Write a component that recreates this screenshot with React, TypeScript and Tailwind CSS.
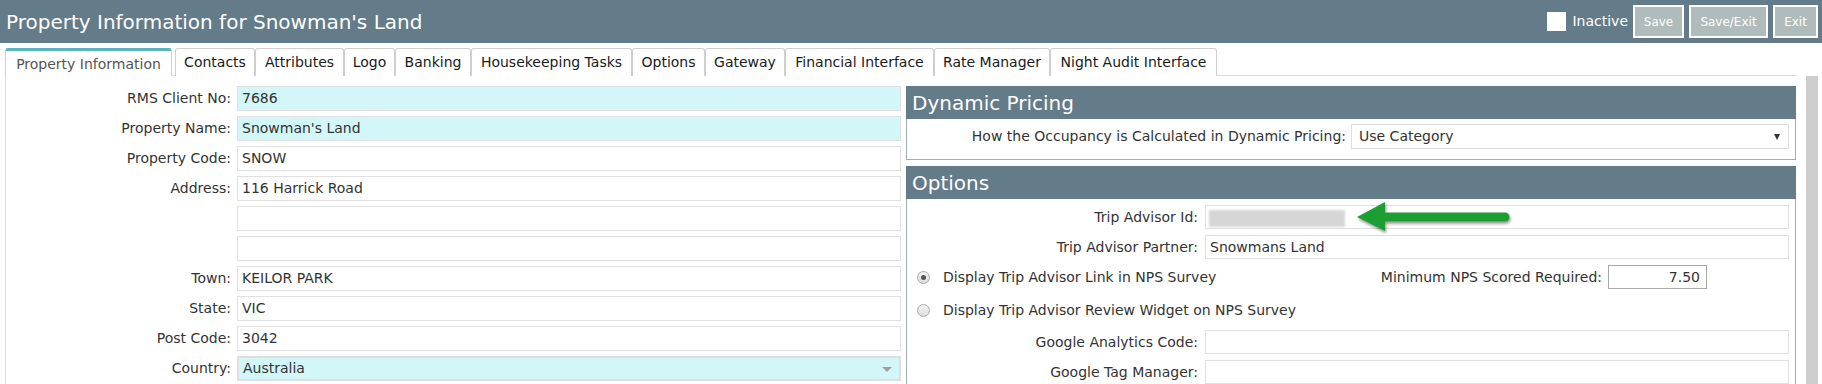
import React from "react";

const tabs = [
  { label: "Property Information", w: 167, active: true },
  { label: "Contacts", w: 80 },
  { label: "Attributes", w: 89 },
  { label: "Logo", w: 51 },
  { label: "Banking", w: 76 },
  { label: "Housekeeping Tasks", w: 161 },
  { label: "Options", w: 73 },
  { label: "Gateway", w: 80 },
  { label: "Financial Interface", w: 149 },
  { label: "Rate Manager", w: 116 },
  { label: "Night Audit Interface", w: 167 },
];

const fields: { label: string; value: string; tone?: "cyan" | "select" }[] = [
  { label: "RMS Client No:", value: "7686", tone: "cyan" },
  { label: "Property Name:", value: "Snowman's Land", tone: "cyan" },
  { label: "Property Code:", value: "SNOW" },
  { label: "Address:", value: "116 Harrick Road" },
  { label: "", value: "" },
  { label: "", value: "" },
  { label: "Town:", value: "KEILOR PARK" },
  { label: "State:", value: "VIC" },
  { label: "Post Code:", value: "3042" },
  { label: "Country:", value: "Australia", tone: "select" },
];

const Radio = ({ checked }: { checked?: boolean }) => (
  <span className="flex h-[13px] w-[13px] flex-none items-center justify-center rounded-full border border-[#a9a9a9] bg-gradient-to-b from-[#f4f4f4] to-[#dcdcdc]">
    {checked && <span className="h-[5px] w-[5px] rounded-full bg-[#555]" />}
  </span>
);

const OptRow = ({ label, children, className = "" }: { label: string; children?: React.ReactNode; className?: string }) => (
  <div className={"flex h-[24px] items-center gap-[7px] " + className}>
    <div className="w-[291px] flex-none text-right">{label}</div>
    <div className="relative h-[24px] flex-1 border border-[#e0e0e0] bg-white pl-[4px] leading-[22px]">
      {children}
    </div>
  </div>
);

export default function App() {
  return (
    <div className="relative h-[384px] w-[1822px] overflow-hidden bg-white font-['DejaVu_Sans',Verdana,sans-serif] text-[#333]">
      {/* title bar */}
      <div className="flex h-[43px] items-center bg-[#647b89] pl-[6px] pr-[4px] text-white">
        <h1 className="text-[20px]">Property Information for Snowman's Land</h1>
        <div className="ml-auto flex items-center">
          <span className="h-[19px] w-[19px] bg-white" />
          <span className="ml-[6px] text-[14px]">Inactive</span>
          <div className="ml-[5px] flex gap-[5px] text-[12px]">
            <button className="h-[33px] w-[51px] border-2 border-white bg-[#b0bbbb]">Save</button>
            <button className="h-[33px] w-[79px] border-2 border-white bg-[#b0bbbb]">Save/Exit</button>
            <button className="h-[33px] w-[45px] border-2 border-white bg-[#b0bbbb]">Exit</button>
          </div>
        </div>
      </div>

      {/* tabs */}
      <div className="relative z-10 mt-[5px] flex pl-[5px] text-[14px]">
        {tabs.map((t) => (
          <div
            key={t.label}
            style={{ width: t.w }}
            className={
              "flex h-[28px] flex-none items-center justify-center rounded-t-[3px] border border-b-0 bg-white " +
              (t.active
                ? "mr-[3px] border-[#d0d0d0] border-t-[3px] border-t-[#5ab4bd] pt-[2px] text-[#555]"
                : "border-[#cfcfcf] text-[#1a1a1a]")
            }
          >
            {t.label}
          </div>
        ))}
      </div>

      <div className="flex">
        {/* content */}
        <div className="-mt-px ml-[5px] flex h-[310px] w-[1792px] flex-none gap-[5px] border-l border-t border-[#dcdcdc] pt-[10px] text-[14px]">
          {/* left column */}
          <div className="flex w-[895px] flex-none flex-col gap-[5px]">
            {fields.map((f, i) => (
              <div key={i} className="flex h-[25px] items-center gap-[6px]">
                <div className="w-[225px] flex-none text-right">{f.label}</div>
                <div
                  className={
                    "relative h-[25px] flex-1 pl-[4px] " +
                    (f.tone === "cyan"
                      ? "border border-[#e0e0e0] bg-[#d3f6f9] leading-[23px]"
                      : f.tone === "select"
                      ? "border-2 border-[#dfdfdf] bg-[#d3f6f9] leading-[21px]"
                      : "border border-[#e0e0e0] bg-white leading-[23px]")
                  }
                >
                  {f.value}
                  {f.tone === "select" && (
                    <span className="absolute right-[7px] top-[9px] h-0 w-0 border-x-[5px] border-t-[5px] border-x-transparent border-t-[#a0a0a0]" />
                  )}
                </div>
              </div>
            ))}
          </div>

          {/* right column */}
          <div className="flex w-[890px] flex-none flex-col">
            <div className="flex h-[33px] items-center bg-[#647b89] pl-[6px] text-[20px] text-white">Dynamic Pricing</div>
            <div className="flex h-[41px] gap-[5px] border-x border-b border-[#9fadb5] pr-[6px] pt-[5px]">
              <div className="flex-1 pt-[2px] text-right">How the Occupancy is Calculated in Dynamic Pricing:</div>
              <div className="relative h-[25px] w-[438px] flex-none border border-[#dedede] bg-white pl-[7px] leading-[23px]">
                Use Category
                <span className="absolute right-[8px] top-[9px] h-0 w-0 border-x-[3.5px] border-t-[6px] border-x-transparent border-t-[#333]" />
              </div>
            </div>

            <div className="mt-[6px] flex h-[33px] items-center bg-[#647b89] pl-[6px] text-[20px] text-white">Options</div>
            <div className="flex flex-1 flex-col border-x border-[#9fadb5] pr-[6px] pt-[6px]">
              <OptRow label="Trip Advisor Id:">
                <div className="absolute left-[3px] top-[4px] h-[17px] w-[136px] bg-[#d6d6d6] blur-[1px]" />
              </OptRow>
              <OptRow label="Trip Advisor Partner:" className="mt-[6px]">
                Snowmans Land
              </OptRow>
              <div className="mt-[6px] flex h-[24px] items-center pl-[10px]">
                <Radio checked />
                <span className="ml-[13px]">Display Trip Advisor Link in NPS Survey</span>
                <div className="ml-auto mr-[82px] flex items-center gap-[6px]">
                  <span>Minimum NPS Scored Required:</span>
                  <div className="h-[24px] w-[99px] border border-[#a9a9a9] pr-[6px] text-right leading-[22px]">7.50</div>
                </div>
              </div>
              <div className="mt-[9px] flex h-[24px] items-center pl-[10px]">
                <Radio />
                <span className="ml-[13px]">Display Trip Advisor Review Widget on NPS Survey</span>
              </div>
              <OptRow label="Google Analytics Code:" className="mt-[8px]" />
              <OptRow label="Google Tag Manager:" className="mt-[6px]" />
            </div>
          </div>
        </div>

        {/* scrollbar */}
        <div className="ml-[9px] h-[310px] w-[12px] flex-none bg-[#cdcdcd]" />
      </div>

      {/* green annotation arrow */}
      <svg className="absolute left-[1350px] top-[196px]" width="170" height="44" viewBox="0 0 170 44">
        <defs>
          <filter id="sh" x="-10%" y="-30%" width="130%" height="170%">
            <feDropShadow dx="1" dy="2" stdDeviation="1.5" floodColor="#000" floodOpacity="0.45" />
          </filter>
        </defs>
        <path
          d="M7 21 L35 6 L35 16.5 L155 16.5 A4.5 4.5 0 0 1 155 25.5 L35 25.5 L35 35 Z"
          fill="#1f9e30"
          filter="url(#sh)"
        />
      </svg>
    </div>
  );
}
